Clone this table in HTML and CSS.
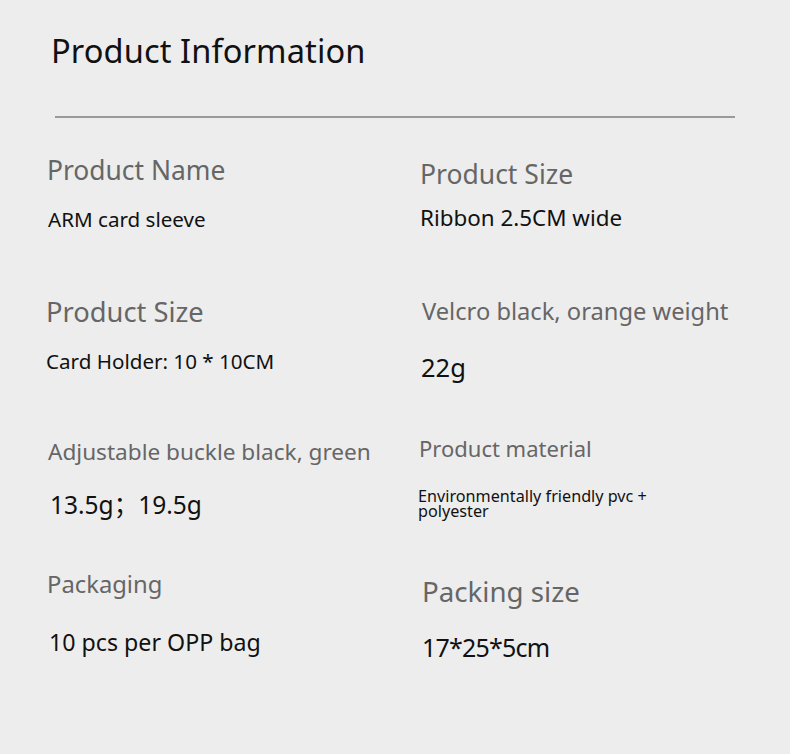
FILE: index.html
```html
<!DOCTYPE html>
<html lang="en">
<head>
<meta charset="utf-8">
<title>Product Information</title>
<link rel="stylesheet" href="styles.css">
</head>
<body>
<main class="page">
  <header class="header">
    <h1 class="title">Product Information</h1>
    <div class="divider"></div>
  </header>
  <section class="grid">
    <div class="cell c1l">
      <div class="label">Product Name</div>
      <div class="value">ARM card sleeve</div>
    </div>
    <div class="cell c1r">
      <div class="label">Product Size</div>
      <div class="value">Ribbon 2.5CM wide</div>
    </div>
    <div class="cell c2l">
      <div class="label">Product Size</div>
      <div class="value">Card Holder: 10 * 10CM</div>
    </div>
    <div class="cell c2r">
      <div class="label">Velcro black, orange weight</div>
      <div class="value">22g</div>
    </div>
    <div class="cell c3l">
      <div class="label">Adjustable buckle black, green</div>
      <div class="value">13.5g；19.5g</div>
    </div>
    <div class="cell c3r">
      <div class="label">Product material</div>
      <div class="value">Environmentally friendly pvc + polyester</div>
    </div>
    <div class="cell c4l">
      <div class="label">Packaging</div>
      <div class="value">10 pcs per OPP bag</div>
    </div>
    <div class="cell c4r">
      <div class="label">Packing size</div>
      <div class="value">17*25*5cm</div>
    </div>
  </section>
</main>
</body>
</html>
```

FILE: styles.css
```css
* { box-sizing: border-box; }
html, body {
  margin: 0;
  padding: 0;
  background: #ededed;
}
body {
  font-family: "Noto Sans", "Open Sans", "Noto Sans CJK SC", sans-serif;
  color: #111;
  width: 790px;
  height: 754px;
  overflow: hidden;
}
.header {
  padding-top: 34px;
}
.title {
  margin: 0 0 0 51px;
  font-size: 32.6px;
  letter-spacing: 0.1px;
  line-height: 34px;
  font-weight: 400;
  color: #111;
}
.divider {
  margin: 48px 0 0 55px;
  width: 680px;
  height: 2px;
  background: #9a9a9a;
}
.grid {
  margin-top: 32px;
  padding-left: 46px;
  display: grid;
  grid-template-columns: 372px 1fr;
  grid-auto-rows: 140px;
}
.cell {
  display: flex;
  flex-direction: column;
  align-items: flex-start;
}
.label {
  color: #666;
  line-height: 1;
  white-space: nowrap;
}
.value {
  color: #111;
  line-height: 1;
  white-space: nowrap;
}

.c1l { padding-top: 7px; }
.c1l .label { font-size: 26.4px; margin-left: 1px; }
.c1l .value { font-size: 20.6px; margin-top: 25.6px; margin-left: 2px; }

.c1r { padding-top: 11.4px; }
.c1r .label { font-size: 26.5px; margin-left: 2px; }
.c1r .value { font-size: 22.4px; margin-top: 18.9px; margin-left: 2px; }

.c2l { padding-top: 7.9px; }
.c2l .label { font-size: 27.3px; }
.c2l .value { font-size: 20.6px; margin-top: 26.2px; }

.c2r { padding-top: 9.9px; }
.c2r .label { font-size: 23.7px; margin-left: 4px; }
.c2r .value { font-size: 25.5px; margin-top: 31px; margin-left: 3px; }

.c3l { padding-top: 11.1px; }
.c3l .label { font-size: 22.6px; margin-left: 2px; }
.c3l .value { font-size: 24.5px; margin-top: 29px; margin-left: 4px; }

.c3r { padding-top: 6.9px; }
.c3r .label { font-size: 22px; margin-left: 1px; }
.c3r .value {
  font-size: 16.2px;
  line-height: 15px;
  margin-top: 30px;
  white-space: normal;
  width: 245px;
}

.c4l { padding-top: 2.6px; }
.c4l .label { font-size: 23.8px; margin-left: 1px; }
.c4l .value { font-size: 23.2px; margin-top: 34.6px; margin-left: 3px; }

.c4r { padding-top: 7.5px; }
.c4r .label { font-size: 27.7px; margin-left: 4px; }
.c4r .value { font-size: 25px; letter-spacing: -0.8px; margin-top: 29.5px; margin-left: 4px; }
```
